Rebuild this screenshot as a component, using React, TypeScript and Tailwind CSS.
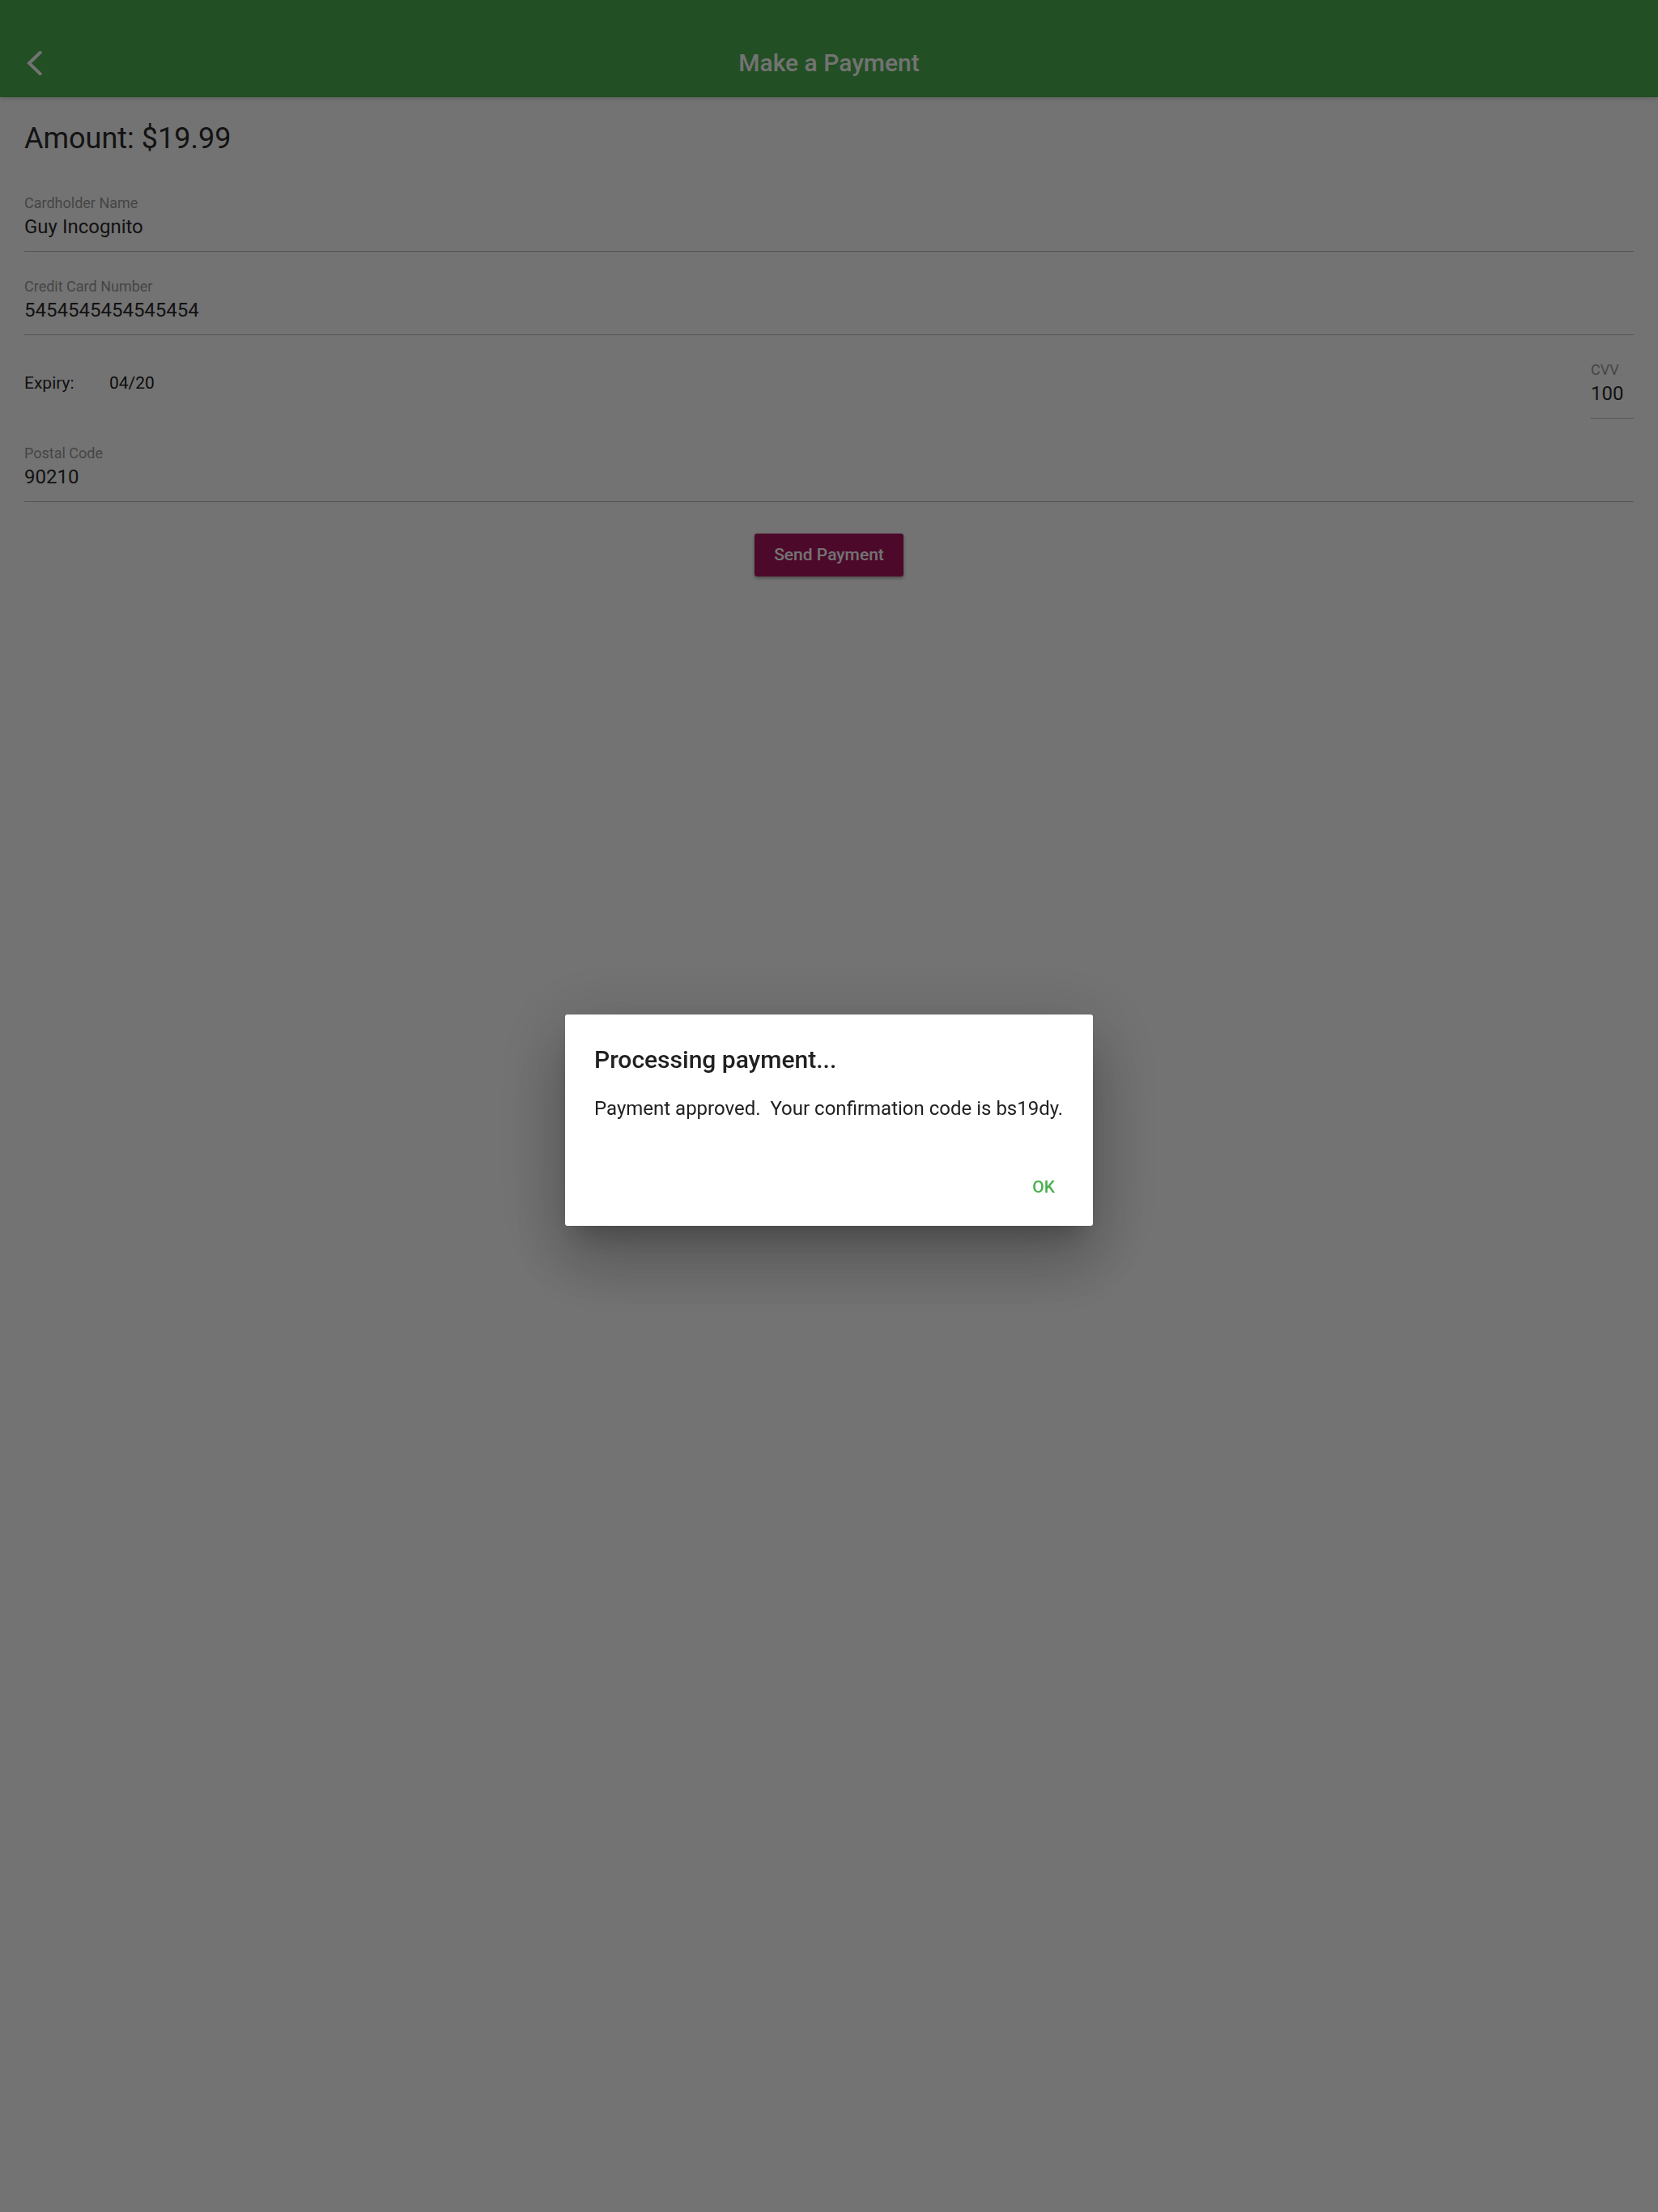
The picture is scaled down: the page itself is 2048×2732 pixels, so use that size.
import React from "react";

interface FieldProps {
  label: string;
  value: string;
  className?: string;
}

// underlined text field, label above value
const Field: React.FC<FieldProps> = ({ label, value, className }) => {
  return (
    <div className={`mt-[32px] border-b border-[#bdbdbd] ${className ?? ""}`}>
      <div className="text-[18px] leading-[22px] text-[#9a9a9a]">{label}</div>
      <div className="mt-[3px] pb-[15px] text-[24px] leading-[30px] text-[#2a2a2a]">
        {value}
      </div>
    </div>
  );
};

const App: React.FC = () => {
  return (
    <div className="relative min-h-screen bg-white font-['Roboto','Liberation_Sans',sans-serif]">
      {/* App bar */}
      <header className="flex h-[120px] items-end bg-[#4CAF50] shadow-md">
        <div className="relative flex h-[84px] w-full items-center justify-center">
          <button className="absolute left-[32px] top-[27px] h-[30px] w-[20px]">
            <svg viewBox="0 0 20 30" className="h-[30px] w-[20px]" fill="none">
              <polyline
                points="17.5,2 4,15 17.5,28"
                stroke="#ffffff"
                strokeWidth="4"
                strokeLinecap="square"
              />
            </svg>
          </button>
          <h1 className="text-[30px] font-medium leading-[36px] text-white">
            Make a Payment
          </h1>
        </div>
      </header>

      {/* Payment form */}
      <main className="flex flex-col px-[30px]">
        <div className="mb-[15px] mt-[29px] text-[36px] leading-[44px] text-[#2a2a2a]">
          Amount: $19.99
        </div>

        <Field label="Cardholder Name" value="Guy Incognito" />
        <Field label="Credit Card Number" value="5454545454545454" />

        <div className="flex items-start justify-between">
          <div className="mt-[44px] flex text-[21px] leading-[30px] text-[#2a2a2a]">
            <span className="w-[105px]">Expiry:</span>
            <span className="text-[#1c1c1c]">04/20</span>
          </div>
          <Field label="CVV" value="100" className="w-[53px]" />
        </div>

        <Field label="Postal Code" value="90210" />

        <div className="mt-[39px] flex justify-center">
          <button className="h-[53px] w-[184px] rounded-[3px] bg-[#AB165E] text-[21px] font-medium text-white shadow-[0_2px_4px_rgba(0,0,0,0.35)]">
            Send Payment
          </button>
        </div>
      </main>

      {/* Modal barrier */}
      <div className="fixed inset-0 bg-black/55" />

      {/* Dialog */}
      <div className="fixed left-[698px] top-[1253px] w-[652px] rounded-[3px] bg-white pb-[34px] pl-[36px] pr-[47px] pt-[38px] shadow-[0_48px_76px_6px_rgba(0,0,0,0.16),0_18px_92px_16px_rgba(0,0,0,0.14),0_22px_30px_-14px_rgba(0,0,0,0.22)]">
        <h2 className="text-[30px] font-medium leading-[36px] text-[#212121]">
          Processing payment...
        </h2>
        <p className="mt-[27px] whitespace-pre text-[24px] leading-[30px] text-[#212121]">
          {"Payment approved.  Your confirmation code is bs19dy."}
        </p>
        <div className="mt-[68px] flex justify-end">
          <button className="text-[21px] font-medium leading-[28px] text-[#4CAF50]">
            OK
          </button>
        </div>
      </div>
    </div>
  );
};

export default App;
